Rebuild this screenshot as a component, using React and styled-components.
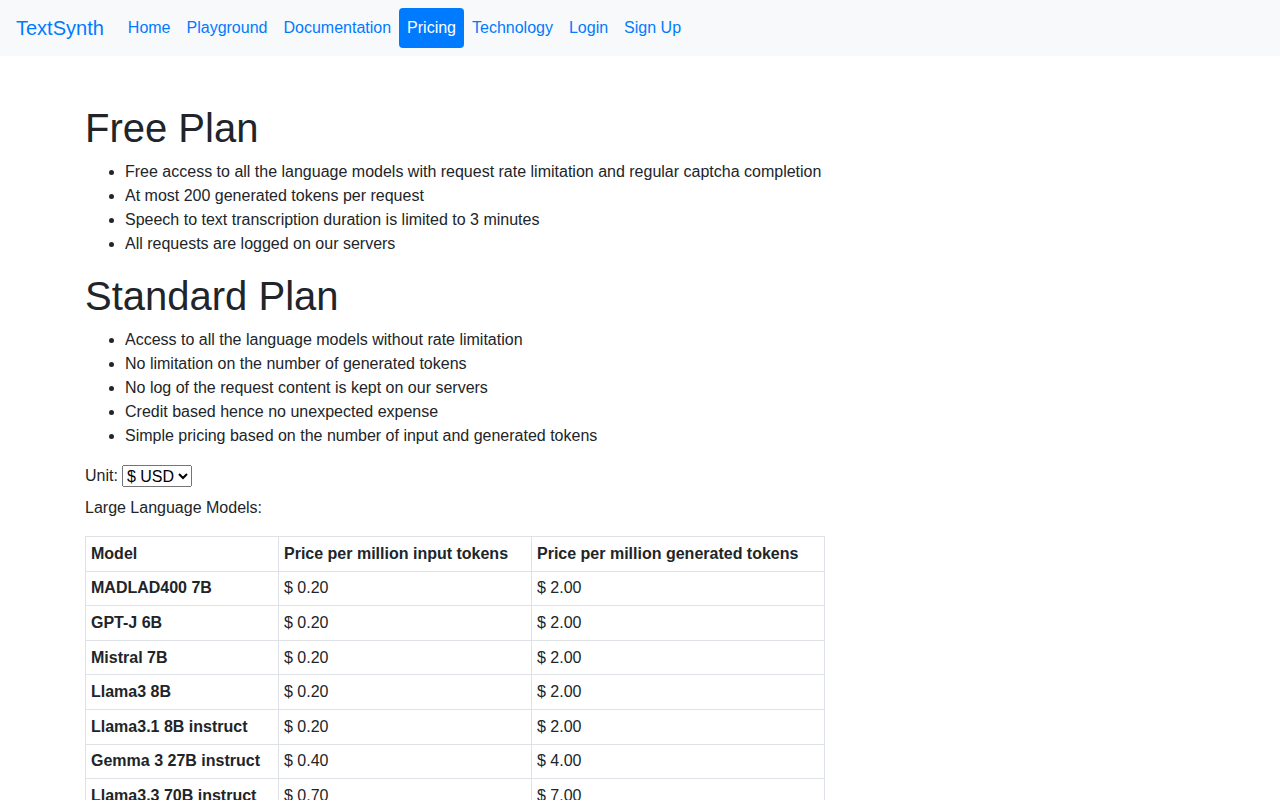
import React from "react";
import styled, { createGlobalStyle } from "styled-components";

const GlobalStyle = createGlobalStyle`
    body {
        margin: 0;
        font-family: "Liberation Sans", Arial, sans-serif;
        font-size: 16px;
        line-height: 1.5;
        color: #212529;
        background: #fff;
    }
    * { box-sizing: border-box; }
`;

const NavBar = styled.nav`
    display: flex;
    align-items: center;
    padding: 8px 16px;
    background-color: #f8f9fa;
`;

const Brand = styled.a`
    font-size: 20px;
    line-height: 30px;
    padding: 5px 0;
    margin-right: 16px;
    color: #007bff;
    text-decoration: none;
`;

const NavList = styled.ul`
    display: flex;
    list-style: none;
    margin: 0;
    padding: 0;
`;

const NavLink = styled.a`
    display: block;
    padding: 8px;
    line-height: 24px;
    border-radius: 4px;
    text-decoration: none;
    color: ${(p) => (p.$active ? "#fff" : "#007bff")};
    background: ${(p) => (p.$active ? "#007bff" : "transparent")};
`;

const Container = styled.main`
    max-width: 1140px;
    margin: 0 auto;
    padding: 48px 15px 40px;
`;

const Title = styled.h1`
    font-size: 40px;
    font-weight: 500;
    line-height: 1.2;
    margin: 0 0 8px;
`;

const Bullets = styled.ul`
    margin: 0 0 16px;
    padding-left: 40px;
`;

const UnitRow = styled.div`
    margin-bottom: 8px;
    display: flex;
    align-items: center;
    gap: 4px;
    height: 24px;
`;

const UnitSelect = styled.select`
    font-family: inherit;
    font-size: 16px;
    color: #000;
    height: 22px;
`;

const Caption = styled.p`
    margin: 0 0 16px;
`;

const Table = styled.table`
    border-collapse: collapse;
    margin-bottom: 16px;
`;

const Th = styled.th`
    text-align: left;
    font-weight: 700;
    padding: 4.8px 5px;
    border: 1px solid #dee2e6;
    width: ${(p) => p.$w}px;
    white-space: nowrap;
`;

const Td = styled.td`
    padding: 4.8px 5px;
    border: 1px solid #dee2e6;
    font-weight: ${(p) => (p.$bold ? 700 : 400)};
    white-space: nowrap;
`;

const links = ["Home", "Playground", "Documentation", "Pricing", "Technology", "Login", "Sign Up"];

const freePlan = [
    "Free access to all the language models with request rate limitation and regular captcha completion",
    "At most 200 generated tokens per request",
    "Speech to text transcription duration is limited to 3 minutes",
    "All requests are logged on our servers",
];

const standardPlan = [
    "Access to all the language models without rate limitation",
    "No limitation on the number of generated tokens",
    "No log of the request content is kept on our servers",
    "Credit based hence no unexpected expense",
    "Simple pricing based on the number of input and generated tokens",
];

const models = [
    ["MADLAD400 7B", "0.20", "2.00"],
    ["GPT-J 6B", "0.20", "2.00"],
    ["Mistral 7B", "0.20", "2.00"],
    ["Llama3 8B", "0.20", "2.00"],
    ["Llama3.1 8B instruct", "0.20", "2.00"],
    ["Gemma 3 27B instruct", "0.40", "4.00"],
    ["Llama3.3 70B instruct", "0.70", "7.00"],
    ["Flan-T5 XXL", "0.20", "2.00"],
];

export default function App() {
    return (
        <>
            <GlobalStyle />
            <NavBar>
                <Brand href="#">TextSynth</Brand>
                <NavList>
                    {links.map((l) => (
                        <li key={l}>
                            <NavLink href="#" $active={l === "Pricing"}>{l}</NavLink>
                        </li>
                    ))}
                </NavList>
            </NavBar>
            <Container>
                <Title>Free Plan</Title>
                <Bullets>
                    {freePlan.map((t) => <li key={t}>{t}</li>)}
                </Bullets>
                <Title>Standard Plan</Title>
                <Bullets>
                    {standardPlan.map((t) => <li key={t}>{t}</li>)}
                </Bullets>
                <UnitRow>
                    Unit:
                    <UnitSelect defaultValue="usd">
                        <option value="usd">$ USD</option>
                        <option value="eur">€ EUR</option>
                    </UnitSelect>
                </UnitRow>
                <Caption>Large Language Models:</Caption>
                <Table>
                    <thead>
                        <tr>
                            <Th $w={193}>Model</Th>
                            <Th $w={253}>Price per million input tokens</Th>
                            <Th $w={293}>Price per million generated tokens</Th>
                        </tr>
                    </thead>
                    <tbody>
                        {models.map(([name, input, output]) => (
                            <tr key={name}>
                                <Td $bold>{name}</Td>
                                <Td>$ {input}</Td>
                                <Td>$ {output}</Td>
                            </tr>
                        ))}
                    </tbody>
                </Table>
            </Container>
        </>
    );
}
